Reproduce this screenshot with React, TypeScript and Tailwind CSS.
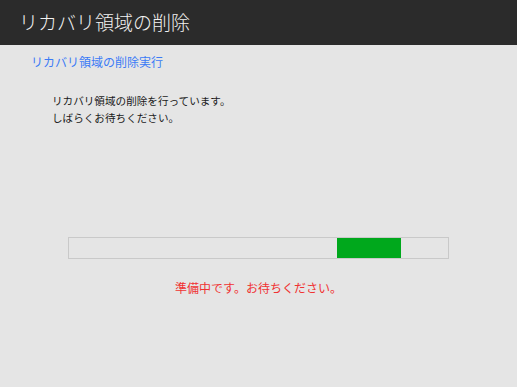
export default function App() {
  // リカバリ領域の削除 — 進行中の画面
  const progressOffset = 268
  const progressWidth = 64

  return (
    <div
      className="w-[517px] h-[387px] bg-[#e5e5e5] overflow-hidden"
      style={{ fontFamily: '"Noto Sans CJK JP", "Noto Sans", sans-serif' }}
    >
      <div className="h-[45px] bg-[#2b2b2b] flex items-center pl-[19px] pb-[3px]">
        <h1 className="text-[19px] leading-none text-[#f2f2f2] font-light">リカバリ領域の削除</h1>
      </div>

      <div className="pl-[31px] mt-[9px] text-[12px] leading-[16px] text-[#3b7bf6]">
        リカバリ領域の削除実行
      </div>

      <div className="pl-[52px] mt-[22px] text-[10.6px] leading-[17px] text-[#1a1a1a]">
        <p>リカバリ領域の削除を行っています。</p>
        <p>しばらくお待ちください。</p>
      </div>

      <div className="ml-[68px] mt-[111px] w-[381px] h-[22px] border border-[#c9c9c9] flex">
        <div className="h-[20px] bg-[#00a81c]" style={{ marginLeft: progressOffset, width: progressWidth }} />
      </div>

      <p className="mt-[21px] text-center text-[12px] leading-[16px] text-[#f03232]">
        準備中です。お待ちください。
      </p>
    </div>
  )
}
